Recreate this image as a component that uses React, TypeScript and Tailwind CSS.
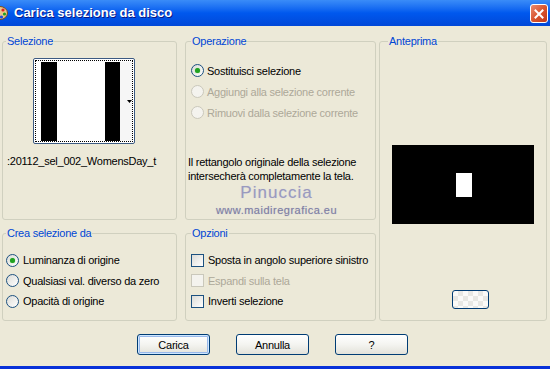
import React from "react";

function Radio({ checked = false, disabled = false }: { checked?: boolean; disabled?: boolean }) {
  return (
    <span
      className={
        "flex h-[13px] w-[13px] shrink-0 items-center justify-center rounded-full border " +
        (disabled
          ? "border-[#CAC8BB] bg-[#F4F3EE]"
          : "border-[#1C5180] bg-linear-to-br from-[#DCDCD7] to-white")
      }
    >
      {checked && <span className="h-[5px] w-[5px] rounded-full bg-[#21A121] shadow-[0_0_1px_#5CD05C]" />}
    </span>
  );
}

function Check({ disabled = false }: { disabled?: boolean }) {
  return (
    <span
      className={
        "block h-[13px] w-[13px] shrink-0 border " +
        (disabled
          ? "border-[#CAC8BB] bg-[#F4F3EE]"
          : "border-[#1C5180] bg-linear-to-br from-[#DCDCD7] to-white")
      }
    />
  );
}

function XpButton({ label, isDefault = false }: { label: string; isDefault?: boolean }) {
  return (
    <div
      className={
        "flex h-[21px] w-[73px] items-center justify-center rounded-[3px] border border-[#003C74] bg-linear-to-b from-white via-[#F4F4F0] to-[#E3E2DA] text-black " +
        (isDefault ? "shadow-[inset_0_0_0_1px_#CEE7FF,inset_0_0_0_2px_#98B8EA]" : "")
      }
    >
      {label}
    </div>
  );
}

export default function App() {
  return (
    <div className="flex h-[369px] w-[550px] flex-col overflow-hidden border-b-[3px] border-[#0831D9] bg-[#ECE9D8] font-['Liberation_Sans',Arial,sans-serif] text-[11px] leading-[14px] tracking-[-0.25px] text-black">
      {/* Title bar */}
      <div className="flex h-[26px] shrink-0 items-center bg-linear-to-b from-[#3A8CF8] via-[#0058EE] to-[#0148D8] pr-[2px]">
        <svg className="ml-[-8px] shrink-0" width="16" height="16" viewBox="0 0 16 16">
          <ellipse cx="8" cy="8" rx="7.5" ry="6.5" fill="#E9C78A" stroke="#7A4B1A" strokeWidth="1" />
          <circle cx="11" cy="5" r="1.6" fill="#E02020" />
          <circle cx="12.5" cy="9" r="1.6" fill="#20A020" />
          <circle cx="9.5" cy="12" r="1.6" fill="#2050E0" />
          <circle cx="5" cy="11" r="1.4" fill="#F0E020" />
        </svg>
        <span className="ml-[6px] text-[13px] font-bold leading-[16px] tracking-[0px] text-white [text-shadow:1px_1px_0_#0A1883]">
          Carica selezione da disco
        </span>
        <div className="ml-auto mt-[1px] flex h-[19px] w-[18px] items-center justify-center rounded-[3px] border border-white bg-linear-to-br from-[#E98A6E] via-[#D9552F] to-[#C1381B]">
          <svg width="10" height="10" viewBox="0 0 10 10">
            <path d="M1.5 1.5 L8.5 8.5 M8.5 1.5 L1.5 8.5" stroke="white" strokeWidth="2" strokeLinecap="square" />
          </svg>
        </div>
      </div>

      {/* Body */}
      <div className="flex pt-[8px]">
        {/* Left column */}
        <div className="ml-[2px] flex w-[175px] flex-col gap-[6px]">
          <fieldset className="h-[186px] rounded-[3px] border border-[#D0D0BF]">
            <legend className="ml-[3px] px-[1px] text-[#0046D5]">Selezione</legend>
            <div className="ml-[30px] mt-[10px] h-[86px] w-[102px] rounded-[2px] border border-[#3C5A82] bg-white p-[1px]">
              <div className="flex h-full w-full border border-dotted border-black">
                <div className="flex h-full flex-1 pt-[1px]">
                  <div className="w-[5px] bg-white" />
                  <div className="w-[16px] bg-black" />
                  <div className="w-[48px] bg-white" />
                  <div className="w-[15px] bg-black" />
                  <div className="flex flex-1 items-center justify-end bg-[#F6F6F6]">
                    <svg width="5" height="3" viewBox="0 0 5 3">
                      <path d="M0 0 H5 L2.5 3 Z" fill="black" />
                    </svg>
                  </div>
                </div>
              </div>
            </div>
            <div className="ml-[4px] mt-[10px] whitespace-nowrap">:20112_sel_002_WomensDay_t</div>
          </fieldset>

          <fieldset className="h-[95px] rounded-[3px] border border-[#D0D0BF]">
            <legend className="ml-[3px] px-[1px] text-[#0046D5]">Crea selezione da</legend>
            <div className="flex flex-col pl-[3px] pt-[10px]">
              <div className="flex h-[20.5px] items-center gap-[4px] whitespace-nowrap">
                <Radio checked />
                <span>Luminanza di origine</span>
              </div>
              <div className="flex h-[20.5px] items-center gap-[4px] whitespace-nowrap">
                <Radio />
                <span>Qualsiasi val. diverso da zero</span>
              </div>
              <div className="flex h-[20.5px] items-center gap-[4px] whitespace-nowrap">
                <Radio />
                <span>Opacità di origine</span>
              </div>
            </div>
          </fieldset>
        </div>

        {/* Middle column */}
        <div className="ml-[8px] flex w-[191px] flex-col gap-[6px]">
          <fieldset className="h-[186px] rounded-[3px] border border-[#D0D0BF]">
            <legend className="ml-[5px] px-[1px] text-[#0046D5]">Operazione</legend>
            <div className="flex flex-col pl-[5px] pt-[12px]">
              <div className="flex h-[21px] items-center gap-[3px] whitespace-nowrap">
                <Radio checked />
                <span>Sostituisci selezione</span>
              </div>
              <div className="flex h-[21px] items-center gap-[3px] whitespace-nowrap text-[#ACA899]">
                <Radio disabled />
                <span>Aggiungi alla selezione corrente</span>
              </div>
              <div className="flex h-[21px] items-center gap-[3px] whitespace-nowrap text-[#ACA899]">
                <Radio disabled />
                <span>Rimuovi dalla selezione corrente</span>
              </div>
            </div>
            <div className="mt-[32px] whitespace-nowrap pl-[2px]">
              <div>Il rettangolo originale della selezione</div>
              <div>intersecherà completamente la tela.</div>
            </div>
            <div className="flex flex-col items-center pr-[8px]">
              <div className="mt-[1px] text-[17px] leading-[18px] tracking-[1px] text-[#9A9ABE] [text-shadow:0_0_1px_#C8C8DC]">
                Pinuccia
              </div>
              <div className="mt-[1px] text-[11px] leading-[14px] tracking-[0.5px] text-[#7E7EA2] [text-shadow:0_0_1px_#B8B8CC]">
                www.maidiregrafica.eu
              </div>
            </div>
          </fieldset>

          <fieldset className="h-[95px] rounded-[3px] border border-[#D0D0BF]">
            <legend className="ml-[5px] px-[1px] text-[#0046D5]">Opzioni</legend>
            <div className="flex flex-col pl-[5px] pt-[10px]">
              <div className="flex h-[20.5px] items-center gap-[4px] whitespace-nowrap">
                <Check />
                <span>Sposta in angolo superiore sinistro</span>
              </div>
              <div className="flex h-[20.5px] items-center gap-[4px] whitespace-nowrap text-[#ACA899]">
                <Check disabled />
                <span>Espandi sulla tela</span>
              </div>
              <div className="flex h-[20.5px] items-center gap-[4px] whitespace-nowrap">
                <Check />
                <span>Inverti selezione</span>
              </div>
            </div>
          </fieldset>
        </div>

        {/* Right column */}
        <div className="ml-[3px] w-[168px]">
          <fieldset className="h-[287px] rounded-[3px] border border-[#D0D0BF]">
            <legend className="ml-[8px] px-[1px] text-[#0046D5]">Anteprima</legend>
            <div className="ml-[12px] mt-[97px] flex h-[79px] w-[142px] items-center justify-center bg-black">
              <div className="ml-[2px] h-[24px] w-[16px] bg-white" />
            </div>
            <div className="ml-[72px] mt-[66px] h-[19px] w-[37px] rounded-[3px] border border-[#003C74] bg-[#F2F2EE] bg-[repeating-conic-gradient(#E8E8E4_0%_25%,#FAFAF8_0%_50%)] bg-[length:10px_10px]" />
          </fieldset>
        </div>
      </div>

      {/* Buttons */}
      <div className="ml-[137px] mt-[13px] flex gap-[26px]">
        <XpButton label="Carica" isDefault />
        <XpButton label="Annulla" />
        <XpButton label="?" />
      </div>
    </div>
  );
}
